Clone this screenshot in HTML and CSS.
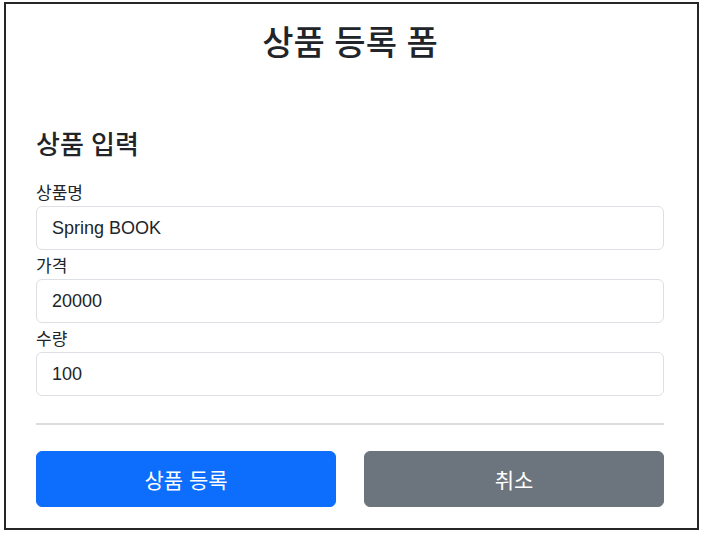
FILE: index.html
```html
<!DOCTYPE html>
<html lang="ko">
<head>
<meta charset="utf-8">
<title>상품 등록 폼</title>
<link rel="stylesheet" href="styles.css">
</head>
<body>
<div class="frame">
  <h2 class="title">상품 등록 폼</h2>
  <h4 class="section">상품 입력</h4>
  <form class="form">
    <div class="field">
      <label class="label" for="itemName">상품명</label>
      <input class="control" id="itemName" type="text" value="Spring BOOK">
    </div>
    <div class="field">
      <label class="label" for="price">가격</label>
      <input class="control" id="price" type="text" value="20000">
    </div>
    <div class="field">
      <label class="label" for="quantity">수량</label>
      <input class="control" id="quantity" type="text" value="100">
    </div>
    <hr class="divider">
    <div class="actions">
      <button class="btn btn-primary" type="button">상품 등록</button>
      <button class="btn btn-secondary" type="button">취소</button>
    </div>
  </form>
</div>
</body>
</html>
```

FILE: styles.css
```css
html, body {
  margin: 0;
  padding: 0;
  background: #ffffff;
}

body {
  font-family: "Liberation Sans", "Noto Sans CJK KR", sans-serif;
  color: #212529;
}

.frame {
  box-sizing: border-box;
  width: 695px;
  height: 528px;
  margin: 2px 0 0 4px;
  border: 2px solid #262626;
  padding: 0 33px 0 30px;
}

.title {
  margin: 15px 0 0;
  font-family: "Noto Sans CJK KR", sans-serif;
  font-size: 34px;
  font-weight: 500;
  line-height: 43px;
  text-align: center;
  color: #212529;
}

.section {
  margin: 65px 0 0;
  font-family: "Noto Sans CJK KR", sans-serif;
  font-size: 26px;
  font-weight: 500;
  line-height: 32px;
  color: #212529;
}

.form {
  margin: 18px 0 0;
}

.field {
  display: flex;
  flex-direction: column;
}

.label {
  display: block;
  font-family: "Noto Sans CJK KR", sans-serif;
  font-size: 17px;
  line-height: 29px;
  height: 29px;
  color: #212529;
}

.control {
  box-sizing: border-box;
  height: 44px;
  width: 100%;
  margin: 0;
  padding: 0 15px;
  border: 1px solid #dcdfe3;
  border-radius: 6px;
  font-family: "Liberation Sans", "Noto Sans CJK KR", sans-serif;
  font-size: 18px;
  color: #212529;
  background: #fff;
  outline: none;
}

.divider {
  margin: 27px 0 0;
  border: 0;
  height: 2px;
  background: #dadcdf;
}

.actions {
  display: grid;
  grid-template-columns: 1fr 1fr;
  column-gap: 28px;
  margin-top: 26px;
}

.btn {
  height: 56px;
  border: 1px solid transparent;
  border-radius: 6px;
  font-family: "Noto Sans CJK KR", sans-serif;
  font-size: 21px;
  color: #ffffff;
  cursor: pointer;
  padding: 0;
}

.btn-primary {
  background: #0d6efd;
  border-color: #0d6efd;
}

.btn-secondary {
  background: #6c757d;
  border-color: #6c757d;
}
```
